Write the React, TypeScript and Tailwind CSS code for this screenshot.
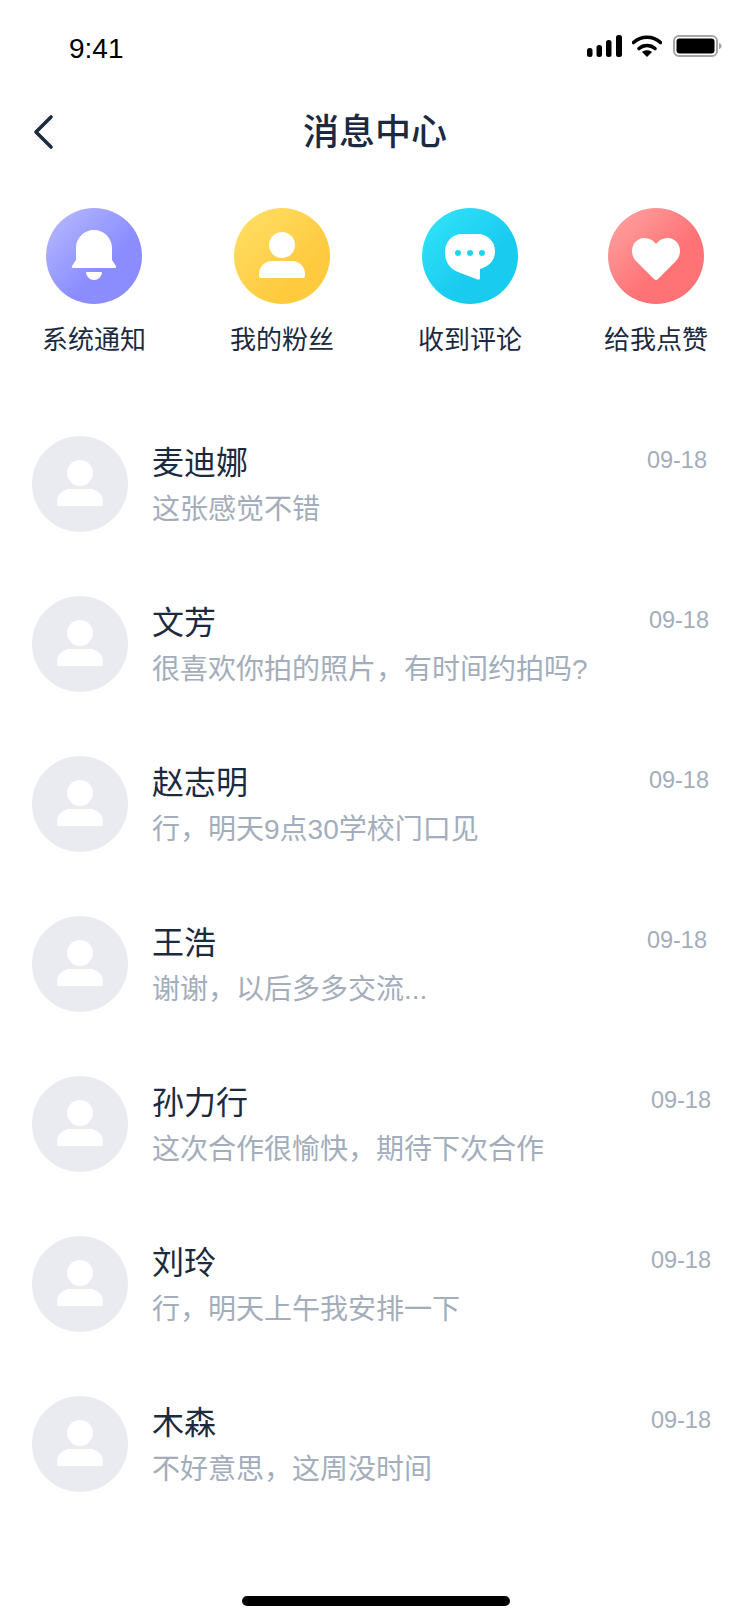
import React from 'react';

const messages = [
  { name: '麦迪娜', text: '这张感觉不错', date: '09-18', dateClass: 'mr-[43px]' },
  { name: '文芳', text: '很喜欢你拍的照片，有时间约拍吗?', date: '09-18', dateClass: 'mr-[41px]' },
  { name: '赵志明', text: '行，明天9点30学校门口见', date: '09-18', dateClass: 'mr-[41px]' },
  { name: '王浩', text: '谢谢，以后多多交流...', date: '09-18', dateClass: 'mr-[43px]' },
  { name: '孙力行', text: '这次合作很愉快，期待下次合作', date: '09-18', dateClass: 'mr-[39px]' },
  { name: '刘玲', text: '行，明天上午我安排一下', date: '09-18', dateClass: 'mr-[39px]' },
  { name: '木森', text: '不好意思，这周没时间', date: '09-18', dateClass: 'mr-[39px]' },
];

const PersonIcon = ({ fill = 'white' }: { fill?: string }) => (
  <svg width="96" height="96" viewBox="0 0 96 96">
    <circle cx="48" cy="37" r="13" fill={fill} />
    <path d="M38 53h20a13 13 0 0 1 13 13v1.500a2.500 2.500 0 0 1-2.500 2.500h-41a2.500 2.500 0 0 1-2.500-2.500V66a13 13 0 0 1 13-13Z" fill={fill} />
  </svg>
);

const BellIcon = () => (
  <svg width="96" height="96" viewBox="0 0 96 96">
    <path d="M48 22c10 0 18 8 18 18v12l4 6c.6 1 0 2-1 2H27c-1 0-1.600-1-1-2l4-6V40c0-10 8-18 18-18Z" fill="white" />
    <path d="M40 64h16a8 8 0 0 1-16 0Z" fill="white" />
  </svg>
);

const ChatIcon = () => (
  <svg width="96" height="96" viewBox="0 0 96 96">
    <path d="M40 26h16c10 0 17 8 17 17 0 9-5 15-15 18v9c0 1.500-1 2-2.500 1.600L36 64c-8-3-13-10-13-20 0-10 7-18 17-18Z" fill="white" />
    <circle cx="36" cy="45" r="3" fill="#1fd3f3" />
    <circle cx="48" cy="45" r="3" fill="#1fd3f3" />
    <circle cx="60" cy="45" r="3" fill="#1fd3f3" />
  </svg>
);

const HeartIcon = () => (
  <svg width="96" height="96" viewBox="0 0 96 96">
    <path d="M48 36c3-4 7-6 11.500-6C66.500 30 72 35.500 72 43c0 4-1.500 7.500-4.500 10.500L50 71c-1.200 1.200-2.800 1.200-4 0L28.500 53.500C25.500 50.500 24 47 24 43c0-7.500 5.500-13 12.500-13 4.500 0 8.500 2 11.500 6Z" fill="white" />
  </svg>
);

const shortcuts = [
  { label: '系统通知', icon: <BellIcon />, bg: 'from-[#bbbcfd] to-[#8b8dff] to-60%', gap: '' },
  { label: '我的粉丝', icon: <PersonIcon />, bg: 'from-[#ffe066] to-[#ffca3e] to-70%', gap: 'ml-[92px]' },
  { label: '收到评论', icon: <ChatIcon />, bg: 'from-[#33e6f9] to-[#1acbf0] to-60%', gap: 'ml-[92px]' },
  { label: '给我点赞', icon: <HeartIcon />, bg: 'from-[#ffa5a5] to-[#ff7276] to-60%', gap: 'ml-[90px]' },
];

export default function App() {
  return (
    <div className="min-h-[1624px] bg-white font-['Liberation_Sans','Noto_Sans_CJK_SC',sans-serif] text-[#1b2a3f]">
      {/* status bar */}
      <div className="flex h-[88px] items-start justify-between pl-[69px] pr-[28px] pt-[33px]">
        <span className="text-[28px] leading-[32px] text-black">9:41</span>
        <div className="mt-[2px] flex items-center">
          <svg width="35" height="22" viewBox="0 0 35 22">
            <rect x="0" y="13" width="5.500" height="9" rx="2.500" fill="black" />
            <rect x="9.500" y="10" width="5.500" height="12" rx="2.500" fill="black" />
            <rect x="19" y="5" width="5.500" height="17" rx="2.500" fill="black" />
            <rect x="29" y="0" width="6" height="22" rx="2.500" fill="black" />
          </svg>
          <svg className="ml-[10px]" width="30" height="22" viewBox="0 0 30 22">
            <path d="M1.500 7.500C9 .5 21 .5 28.500 7.500" fill="none" stroke="black" strokeWidth="3.600" strokeLinecap="round" />
            <path d="M7 13.500c4.500-4 11.500-4 16 0" fill="none" stroke="black" strokeWidth="3.600" strokeLinecap="round" />
            <path d="M15 22l-5-5c2.800-2.400 7.200-2.400 10 0l-5 5Z" fill="black" />
          </svg>
          <svg className="ml-[11px]" width="49" height="22" viewBox="0 0 49 22">
            <rect x="1" y="1" width="43" height="20" rx="5" fill="none" stroke="#a6a6a6" strokeWidth="2" />
            <rect x="3.500" y="3.500" width="38" height="15" rx="3" fill="black" />
            <path d="M46 8c1.600.4 2.600 1.500 2.600 3s-1 2.600-2.600 3Z" fill="#a6a6a6" />
          </svg>
        </div>
      </div>

      {/* nav */}
      <div className="relative flex h-[88px] items-center justify-center">
        <svg className="absolute left-[32px] top-[26px]" width="22" height="36" viewBox="0 0 22 36">
          <path d="M19 3L4 18l15 15" fill="none" stroke="#1b2a3f" strokeWidth="3.600" strokeLinecap="round" strokeLinejoin="round" />
        </svg>
        <h1 className="mt-[2px] text-[36px] font-medium leading-[44px]">消息中心</h1>
      </div>

      {/* shortcuts */}
      <div className="mt-[32px] flex pl-[46px]">
        {shortcuts.map((item) => (
          <div key={item.label} className={`flex w-[96px] flex-col items-center ${item.gap}`}>
            <div className={`h-[96px] w-[96px] rounded-full bg-linear-to-br ${item.bg}`}>{item.icon}</div>
            <span className="mt-[18px] whitespace-nowrap text-[26px] leading-[36px]">{item.label}</span>
          </div>
        ))}
      </div>

      {/* message list */}
      <div className="mt-[78px] flex flex-col gap-[64px] pl-[32px]">
        {messages.map((msg) => (
          <div key={msg.name} className="flex h-[96px] items-start">
            <div className="h-[96px] w-[96px] shrink-0 rounded-full bg-[#e9ebf0]">
              <PersonIcon />
            </div>
            <div className="ml-[24px] flex-1">
              <div className="mt-[7px] text-[32px] leading-[40px]">{msg.name}</div>
              <div className="mt-[7px] text-[28px] leading-[40px] text-[#a3adbb]">{msg.text}</div>
            </div>
            <span className={`mt-[10px] text-[23.500px] leading-[28px] text-[#a3adbb] ${msg.dateClass}`}>{msg.date}</span>
          </div>
        ))}
      </div>

      {/* home indicator */}
      <div className="mt-[104px] flex justify-center">
        <div className="ml-[2px] h-[10px] w-[268px] rounded-full bg-black" />
      </div>
    </div>
  );
}
